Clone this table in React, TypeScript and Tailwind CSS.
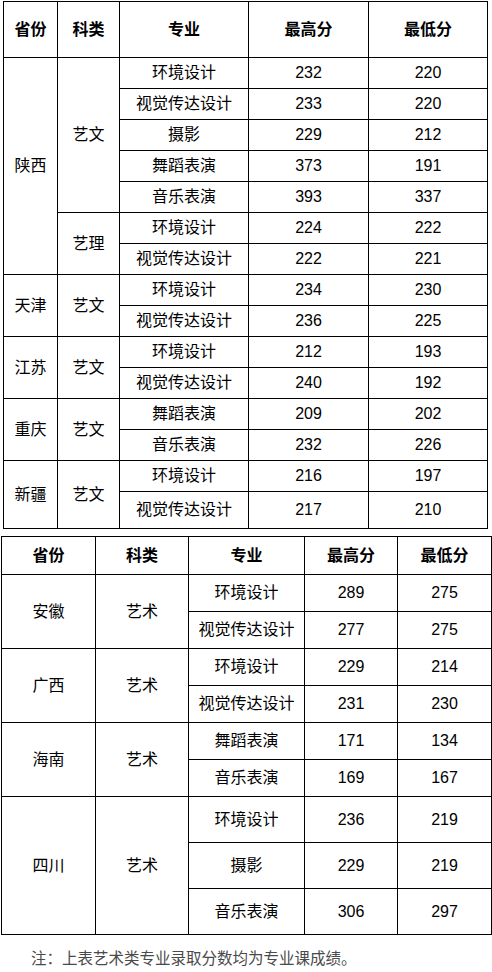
import React from "react";

type Row = { major: string; high: number; low: number };
type CatGroup = { cat: string; rows: Row[] };
type Province = { name: string; cats: CatGroup[] };

const table1: Province[] = [
  {
    name: "陕西",
    cats: [
      {
        cat: "艺文",
        rows: [
          { major: "环境设计", high: 232, low: 220 },
          { major: "视觉传达设计", high: 233, low: 220 },
          { major: "摄影", high: 229, low: 212 },
          { major: "舞蹈表演", high: 373, low: 191 },
          { major: "音乐表演", high: 393, low: 337 },
        ],
      },
      {
        cat: "艺理",
        rows: [
          { major: "环境设计", high: 224, low: 222 },
          { major: "视觉传达设计", high: 222, low: 221 },
        ],
      },
    ],
  },
  {
    name: "天津",
    cats: [
      {
        cat: "艺文",
        rows: [
          { major: "环境设计", high: 234, low: 230 },
          { major: "视觉传达设计", high: 236, low: 225 },
        ],
      },
    ],
  },
  {
    name: "江苏",
    cats: [
      {
        cat: "艺文",
        rows: [
          { major: "环境设计", high: 212, low: 193 },
          { major: "视觉传达设计", high: 240, low: 192 },
        ],
      },
    ],
  },
  {
    name: "重庆",
    cats: [
      {
        cat: "艺文",
        rows: [
          { major: "舞蹈表演", high: 209, low: 202 },
          { major: "音乐表演", high: 232, low: 226 },
        ],
      },
    ],
  },
  {
    name: "新疆",
    cats: [
      {
        cat: "艺文",
        rows: [
          { major: "环境设计", high: 216, low: 197 },
          { major: "视觉传达设计", high: 217, low: 210 },
        ],
      },
    ],
  },
];

const table2: Province[] = [
  {
    name: "安徽",
    cats: [
      {
        cat: "艺术",
        rows: [
          { major: "环境设计", high: 289, low: 275 },
          { major: "视觉传达设计", high: 277, low: 275 },
        ],
      },
    ],
  },
  {
    name: "广西",
    cats: [
      {
        cat: "艺术",
        rows: [
          { major: "环境设计", high: 229, low: 214 },
          { major: "视觉传达设计", high: 231, low: 230 },
        ],
      },
    ],
  },
  {
    name: "海南",
    cats: [
      {
        cat: "艺术",
        rows: [
          { major: "舞蹈表演", high: 171, low: 134 },
          { major: "音乐表演", high: 169, low: 167 },
        ],
      },
    ],
  },
  {
    name: "四川",
    cats: [
      {
        cat: "艺术",
        rows: [
          { major: "环境设计", high: 236, low: 219 },
          { major: "摄影", high: 229, low: 219 },
          { major: "音乐表演", high: 306, low: 297 },
        ],
      },
    ],
  },
];

const headers = ["省份", "科类", "专业", "最高分", "最低分"];
const cell = "border border-black text-center align-middle p-0";

// builds body rows; rowHeight picks the height of each data row
const bodyRows = (data: Province[], rowHeight: (key: string) => string) => {
  const out: React.ReactNode[] = [];
  data.forEach((p) => {
    const total = p.cats.reduce((n, c) => n + c.rows.length, 0);
    p.cats.forEach((c, ci) => {
      c.rows.forEach((r, ri) => {
        const key = `${p.name}-${c.cat}-${ri}`;
        out.push(
          <tr key={key} className={rowHeight(key)}>
            {ci === 0 && ri === 0 && (
              <td rowSpan={total} className={cell}>
                {p.name}
              </td>
            )}
            {ri === 0 && (
              <td rowSpan={c.rows.length} className={cell}>
                {c.cat}
              </td>
            )}
            <td className={cell}>{r.major}</td>
            <td className={cell}>{r.high}</td>
            <td className={cell}>{r.low}</td>
          </tr>
        );
      });
    });
  });
  return out;
};

export default function App() {
  return (
    <div className="w-[492px] h-[972px] bg-white pt-px text-black text-[16px] font-['Liberation_Sans','Noto_Sans_CJK_SC',sans-serif] overflow-hidden">
      {/* first table */}
      <table className="ml-[3px] w-[484px] table-fixed border-collapse">
        <colgroup>
          <col className="w-[54px]" />
          <col className="w-[62px]" />
          <col className="w-[129px]" />
          <col className="w-[120px]" />
          <col className="w-[119px]" />
        </colgroup>
        <thead>
          <tr className="h-[56px]">
            {headers.map((h) => (
              <th key={h} className={`${cell} font-bold`}>
                {h}
              </th>
            ))}
          </tr>
        </thead>
        <tbody>
          {bodyRows(table1, (k) => (k === "新疆-艺文-1" ? "h-[37px]" : "h-[31px]"))}
        </tbody>
      </table>

      {/* second table */}
      <table className="mt-[7px] ml-px w-[490px] table-fixed border-collapse">
        <colgroup>
          <col className="w-[94px]" />
          <col className="w-[93px]" />
          <col className="w-[116px]" />
          <col className="w-[93px]" />
          <col className="w-[94px]" />
        </colgroup>
        <thead>
          <tr className="h-[38px]">
            {headers.map((h) => (
              <th key={h} className={`${cell} font-bold`}>
                {h}
              </th>
            ))}
          </tr>
        </thead>
        <tbody>{bodyRows(table2, (k) => (k.startsWith("四川") ? "h-[46px]" : "h-[37px]"))}</tbody>
      </table>

      <p className="mt-[12px] pl-[31px] text-[15.5px] leading-[20px] text-[#4a4a4a] font-['Noto_Sans_CJK_SC',sans-serif]">
        注：上表艺术类专业录取分数均为专业课成绩。
      </p>
    </div>
  );
}
